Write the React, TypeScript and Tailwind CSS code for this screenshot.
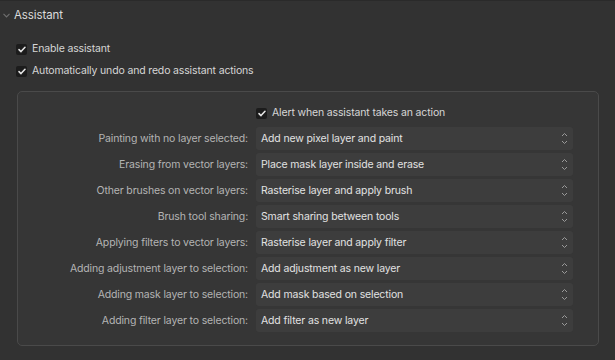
import React from 'react';

const rows: [string, string][] = [
  ['Painting with no layer selected:', 'Add new pixel layer and paint'],
  ['Erasing from vector layers:', 'Place mask layer inside and erase'],
  ['Other brushes on vector layers:', 'Rasterise layer and apply brush'],
  ['Brush tool sharing:', 'Smart sharing between tools'],
  ['Applying filters to vector layers:', 'Rasterise layer and apply filter'],
  ['Adding adjustment layer to selection:', 'Add adjustment as new layer'],
  ['Adding mask layer to selection:', 'Add mask based on selection'],
  ['Adding filter layer to selection:', 'Add filter as new layer'],
];

const Check = ({ label }: { label: string }) => (
  <div className="flex items-center gap-[5px] h-[16px]">
    <span className="w-[11px] h-[11px] rounded-[2px] bg-[#1c1c1c] flex items-center justify-center">
      <svg width="8" height="7" viewBox="0 0 8 7" fill="none">
        <path d="M1 3.6 L3 5.6 L7 1.2" stroke="#e8e8e8" strokeWidth="1.5" strokeLinecap="round" strokeLinejoin="round" />
      </svg>
    </span>
    <span className="text-[10.5px] tracking-[-0.15px] text-[#d6d6d6]">{label}</span>
  </div>
);

const Stepper = () => (
  <svg width="7" height="13" viewBox="0 0 7 13" fill="none">
    <path d="M1 4 L3.5 1.5 L6 4" stroke="#9a9a9a" strokeWidth="1" />
    <path d="M1 9 L3.5 11.5 L6 9" stroke="#9a9a9a" strokeWidth="1" />
  </svg>
);

export default function App() {
  return (
    <div className="w-[615px] h-[360px] bg-[#323232] overflow-hidden" style={{ fontFamily: 'Inter, "Noto Sans", sans-serif' }}>
      <div className="h-[30px] flex items-center border-t border-[#2a2a2a]">
        <svg className="ml-[3px] mr-[4px]" width="7" height="5" viewBox="0 0 7 5" fill="none">
          <path d="M0.5 0.8 L3.5 4 L6.5 0.8" stroke="#6e6e6e" strokeWidth="1.1" />
        </svg>
        <span className="text-[11.5px] tracking-[-0.1px] text-[#dcdcdc]">Assistant</span>
      </div>
      <div className="pl-[16px] pt-[11px] flex flex-col gap-[6px]">
        <Check label="Enable assistant" />
        <Check label="Automatically undo and redo assistant actions" />
      </div>
      <div className="mt-[12px] ml-[17px] w-[582px] h-[255px] rounded-[5px] border border-[#4a4a4a] bg-[#363636] pt-[13px]">
        <div className="pl-[238px]">
          <Check label="Alert when assistant takes an action" />
        </div>
        <div className="mt-[6px] flex flex-col gap-[3px]">
          {rows.map(([label, value]) => (
            <div key={label} className="flex items-center">
              <span className="w-[230px] text-right text-[10.5px] tracking-[-0.15px] text-[#b4b4b4]">{label}</span>
              <div className="ml-[8px] w-[317px] h-[23px] rounded-[3px] bg-[#3d3d3d] flex items-center justify-between pl-[5px] pr-[5px]">
                <span className="text-[10.5px] tracking-[-0.15px] text-[#e2e2e2]">{value}</span>
                <Stepper />
              </div>
            </div>
          ))}
        </div>
      </div>
    </div>
  );
}
